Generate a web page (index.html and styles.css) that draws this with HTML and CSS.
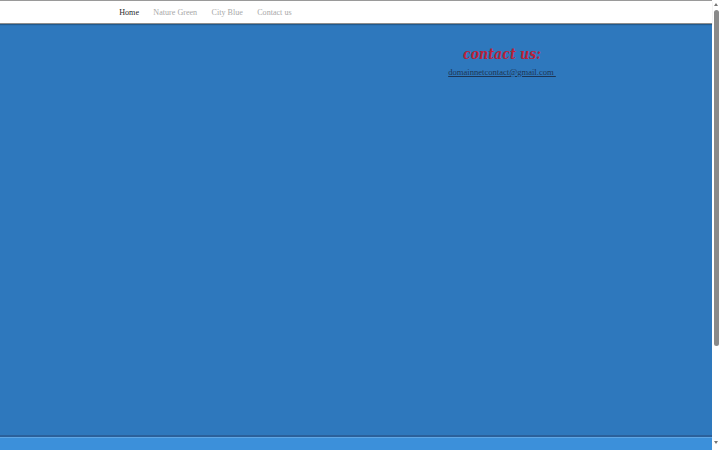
FILE: index.html
```html
<!DOCTYPE html>
<html lang="en">
<head>
  <meta charset="UTF-8">
  <title>Contact us</title>
  <link rel="stylesheet" href="styles.css">
</head>
<body>
  <div class="frame">
    <div class="page">
      <header class="site-header">
        <nav class="site-nav">
          <a class="nav-link active" href="#">Home</a>
          <a class="nav-link" href="#">Nature Green</a>
          <a class="nav-link" href="#">City Blue</a>
          <a class="nav-link" href="#">Contact us</a>
        </nav>
      </header>
      <main class="site-main">
        <section class="contact-box">
          <h2 class="contact-title">contact us:</h2>
          <a class="contact-mail" href="#">domainnetcontact@gmail.com&nbsp;</a>
        </section>
      </main>
      <footer class="site-footer"></footer>
    </div>
    <div class="scrollbar">
      <span class="scroll-arrow up"></span>
      <span class="scroll-thumb"></span>
      <span class="scroll-arrow down"></span>
    </div>
  </div>
</body>
</html>
```

FILE: styles.css
```css
html, body {
  margin: 0;
  padding: 0;
  height: 100%;
  overflow: hidden;
}
body {
  font-family: 'Liberation Serif', 'Times New Roman', serif;
  background: #fff;
}
.frame {
  display: flex;
  height: 450px;
  width: 720px;
}
.page {
  flex: 1;
  display: flex;
  flex-direction: column;
  border-top: 1px solid #9a9a9a;
}
.site-header {
  height: 22px;
  background: #fff;
  border-bottom: 1px solid #8d8d8d;
  box-shadow: 0 1px 1px rgba(0,0,0,0.25);
  position: relative;
  z-index: 1;
}
.site-nav {
  display: flex;
  padding-left: 112px;
  height: 100%;
  align-items: center;
}
.nav-link {
  font-size: 8.1px;
  color: #a8a8a8;
  text-decoration: none;
  padding: 2px 7.2px 0;
  line-height: 20px;
}
.nav-link.active {
  color: #2a2a2a;
}
.site-main {
  flex: 1;
  background: #2e78bd;
  display: flex;
  justify-content: flex-end;
  border-bottom: 2px solid #2b609a;
}
.contact-box {
  width: 220px;
  margin-right: 100px;
  padding-top: 21px;
  text-align: center;
  font-size: 8.6px;
  line-height: 12px;
}
.contact-title {
  margin: 0 0 2px;
  font-family: 'DejaVu Serif Condensed', 'DejaVu Serif', serif;
  font-size: 14px;
  line-height: 19px;
  font-weight: bold;
  font-style: italic;
  color: #b8223a;
}
.contact-mail {
  color: #1d3554;
  text-decoration: underline;
}
.site-footer {
  height: 12px;
  background: #3c90da;
  border-top: 1px solid #5fa6e4;
}
.scrollbar {
  width: 8px;
  background: #fff;
  display: flex;
  flex-direction: column;
  align-items: center;
}
.scroll-arrow {
  width: 0;
  height: 0;
  border-left: 2px solid transparent;
  border-right: 2px solid transparent;
}
.scroll-arrow.up {
  margin-top: 3px;
  border-bottom: 3px solid #777;
}
.scroll-arrow.down {
  margin-top: auto;
  margin-bottom: 6px;
  border-top: 3px solid #777;
}
.scroll-thumb {
  margin-top: 4px;
  width: 5px;
  height: 336px;
  border-radius: 3px;
  background: #8a8a8a;
}
```
